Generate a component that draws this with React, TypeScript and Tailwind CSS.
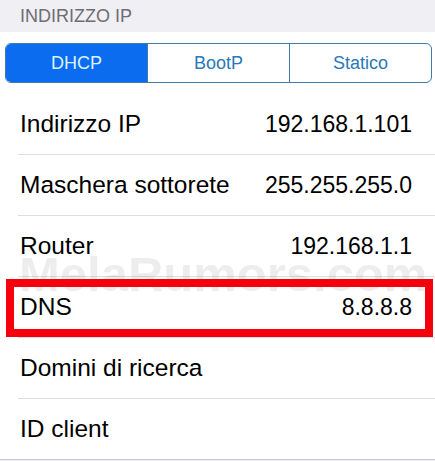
const rows = [
  { label: 'Indirizzo IP', value: '192.168.1.101' },
  { label: 'Maschera sottorete', value: '255.255.255.0' },
  { label: 'Router', value: '192.168.1.1' },
  { label: 'DNS', value: '8.8.8.8', marked: true },
  { label: 'Domini di ricerca', value: '' },
  { label: 'ID client', value: '' },
]

const segments = ['DHCP', 'BootP', 'Statico']

export default function App() {
  return (
    <div
      className="relative h-[461px] w-[435px] overflow-hidden bg-[#efeff4]"
      style={{ fontFamily: '"Liberation Sans", Arial, sans-serif' }}
    >
      <div className="flex h-[32px] items-center pl-[20px] text-[18px] leading-none text-[#6d6d72]">
        INDIRIZZO IP
      </div>

      <div className="border-b border-[#c8c7cc] bg-white">
        <div className="pl-[5px] pr-[3px] pt-[11px]">
          <div className="flex h-[40px] overflow-hidden rounded-[6px] border border-[#3f7aa8]">
            {segments.map((s, i) => (
              <div
                key={s}
                className={
                  i === 0
                    ? 'flex flex-1 items-center justify-center bg-[#0b6cf0] text-[18px] text-[#dff1ff]'
                    : 'flex flex-1 items-center justify-center border-l border-[#3f7aa8] text-[18px] text-[#2a78b8]'
                }
              >
                {s}
              </div>
            ))}
          </div>
        </div>

        <div className="mt-[11px] flex flex-col">
          {rows.map((r, i) => (
            <div key={r.label} className="relative">
              <div className="flex h-[60px] items-center justify-between pl-[20px] pr-[23px] text-[24.5px] text-black">
                <span>{r.label}</span>
                <span className="text-[23px]">{r.value}</span>
              </div>
              {i < rows.length - 1 && <div className="ml-[18px] h-px bg-[#dedede]" />}
              {r.marked && (
                <div className="absolute left-[6px] right-[2px] top-[2px] bottom-[1px] z-10 border-[8px] border-[#f5000c]" />
              )}
            </div>
          ))}
        </div>
      </div>

      <div className="pointer-events-none absolute left-[19px] top-[250px] text-[49px] font-bold leading-none text-black/[0.07]">
        MelaRumors.com
      </div>
    </div>
  )
}
